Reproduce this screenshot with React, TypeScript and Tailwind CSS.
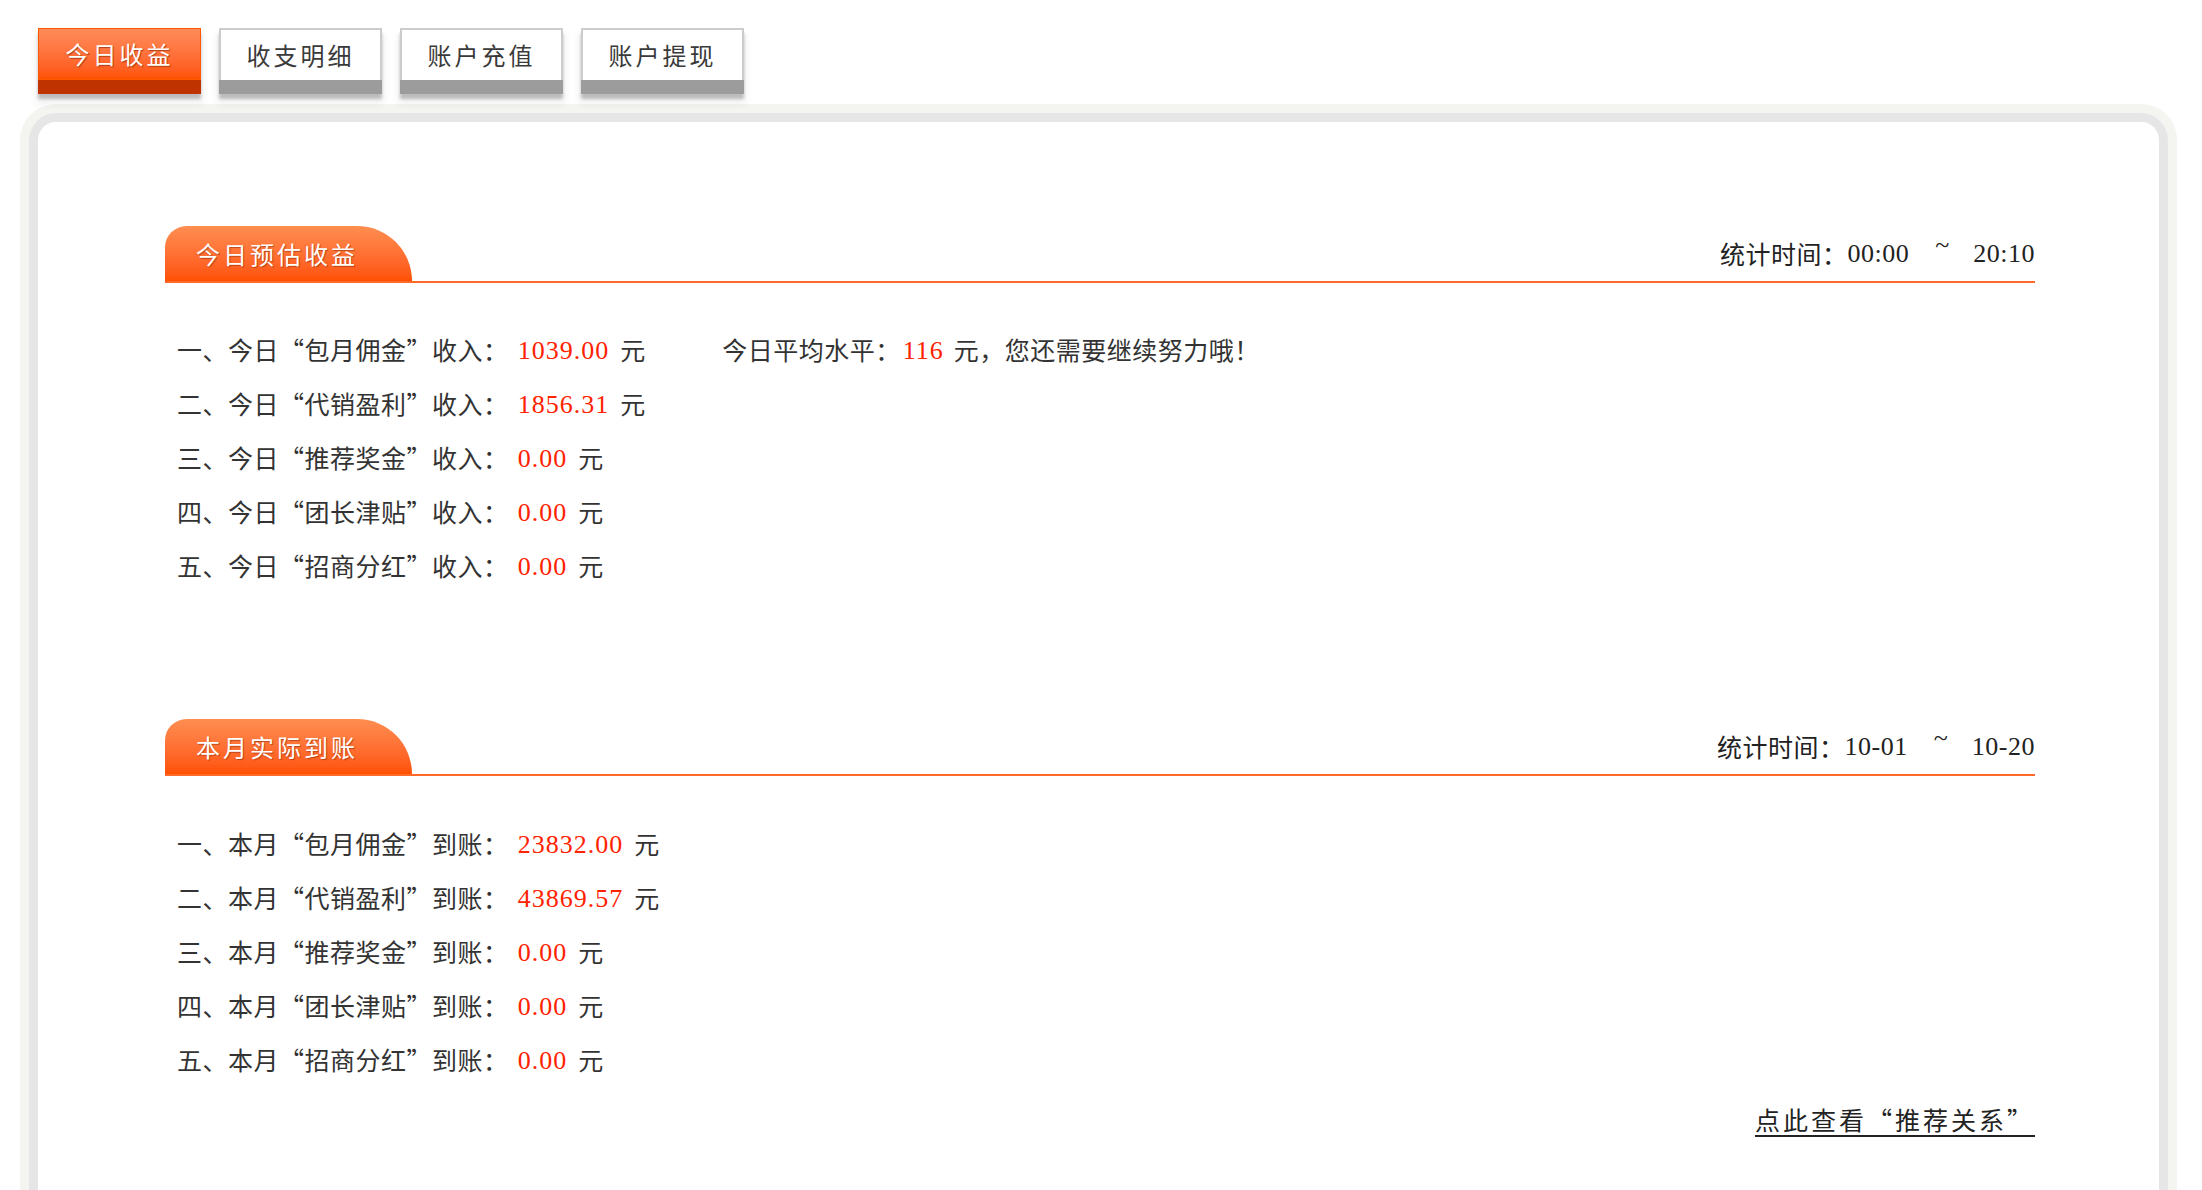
import type { ReactNode } from "react";

const cjk = "font-['Noto_Sans_CJK_SC','Liberation_Serif',serif]";
const num = "font-['Liberation_Serif','Noto_Sans_CJK_SC',serif]";

const tabs = ["今日收益", "收支明细", "账户充值", "账户提现"];

const todayRows = [
  { no: "一", name: "包月佣金", value: "1039.00" },
  { no: "二", name: "代销盈利", value: "1856.31" },
  { no: "三", name: "推荐奖金", value: "0.00" },
  { no: "四", name: "团长津贴", value: "0.00" },
  { no: "五", name: "招商分红", value: "0.00" },
];

const monthRows = [
  { no: "一", name: "包月佣金", value: "23832.00" },
  { no: "二", name: "代销盈利", value: "43869.57" },
  { no: "三", name: "推荐奖金", value: "0.00" },
  { no: "四", name: "团长津贴", value: "0.00" },
  { no: "五", name: "招商分红", value: "0.00" },
];

const Tab = ({ label, active }: { label: string; active?: boolean }) => (
  <div className="flex h-[66px] w-[163px] flex-col shadow-[0_5px_3px_0_rgba(0,0,0,0.22),0_8px_8px_2px_rgba(0,0,0,0.06)]">
    {active ? (
      <div className="flex flex-1 items-center justify-center border border-[#ff5a00] bg-gradient-to-b from-[#ff8c5a] to-[#ff5200]">
        <span className={`${cjk} text-[24px] tracking-[3px] text-white [text-shadow:1px_1px_1px_rgba(120,30,0,0.6)]`}>{label}</span>
      </div>
    ) : (
      <div className="flex flex-1 items-center justify-center border-2 border-b-0 border-[#cccccc] bg-white">
        <span className={`${cjk} text-[24px] tracking-[3px] text-[#3a3a3a]`}>{label}</span>
      </div>
    )}
    <div className={active ? "h-[14px] bg-[#bf3300]" : "h-[14px] bg-[#9c9c9c]"} />
  </div>
);

const SectionHeader = ({ title, stat }: { title: string; stat: ReactNode }) => (
  <div className="flex items-center justify-between border-b-2 border-[#ff6a2a]">
    <div className="flex h-[55px] w-[247px] items-center rounded-tl-[22px] rounded-tr-[56px] bg-gradient-to-b from-[#ff8d50] to-[#ff5000] pl-[31px]">
      <span className={`${cjk} text-[24px] tracking-[3px] text-white [text-shadow:1px_1px_1px_rgba(120,30,0,0.5)]`}>{title}</span>
    </div>
    <div className="text-[#222]">{stat}</div>
  </div>
);

const Stat = ({ from, to }: { from: string; to: string }) => (
  <span className="flex items-center">
    <span className={`${cjk} text-[25px] tracking-[0.5px]`}>统计时间：</span>
    <span className={`${num} text-[26px] tracking-[0.5px]`}>{from}</span>
    <span className={`${num} ml-[26px] mr-[24px] -translate-y-[9px] text-[26px]`}>~</span>
    <span className={`${num} text-[26px] tracking-[0.5px]`}>{to}</span>
  </span>
);

const Row = ({ no, period, name, kind, value, extra }: { no: string; period: string; name: string; kind: string; value: string; extra?: ReactNode }) => (
  <div className="flex h-[54px] items-center pl-[12px] text-[25px] text-[#333]">
    <span className={`${cjk} tracking-[0.5px]`}>
      {no}、{period}“{name}”{kind}：
    </span>
    <span className={`${num} ml-[9px] text-[26px] tracking-[1px] text-[#ff2200]`}>{value}</span>
    <span className={`${cjk} ml-[11px]`}>元</span>
    {extra}
  </div>
);

const App = () => {
  return (
    <div className="min-h-screen overflow-hidden bg-white">
      <div className="flex gap-[18px] pl-[38px] pt-[28px]">
        {tabs.map((t, i) => (
          <Tab key={t} label={t} active={i === 0} />
        ))}
      </div>

      <div className="ml-[20px] mt-[10px] w-[2157px] rounded-[36px] border-[9px] border-[#f4f5f0]">
        <div className="rounded-[27px] border-[9px] border-[#e6e6e6] bg-white pb-[200px] pl-[127px] pr-[124px] pt-[104px]">
          <SectionHeader title="今日预估收益" stat={<Stat from="00:00" to="20:10" />} />
          <div className="mt-[40px]">
            {todayRows.map((r, i) => (
              <Row
                key={r.no}
                no={r.no}
                period="今日"
                name={r.name}
                kind="收入"
                value={r.value}
                extra={
                  i === 0 ? (
                    <span className="ml-[77px] flex items-center">
                      <span className={`${cjk} tracking-[0.5px]`}>今日平均水平：</span>
                      <span className={`${num} ml-[2px] text-[26px] tracking-[1px] text-[#ff2200]`}>116</span>
                      <span className={`${cjk} ml-[10px] tracking-[0.5px]`}>元，您还需要继续努力哦！</span>
                    </span>
                  ) : null
                }
              />
            ))}
          </div>

          <div className="mt-[126px]">
            <SectionHeader title="本月实际到账" stat={<Stat from="10-01" to="10-20" />} />
          </div>
          <div className="mt-[41px]">
            {monthRows.map((r) => (
              <Row key={r.no} no={r.no} period="本月" name={r.name} kind="到账" value={r.value} />
            ))}
          </div>

          <div className="mt-[14px] flex justify-end">
            <a className={`${cjk} text-[25px] tracking-[3px] text-[#222] underline decoration-2 underline-offset-[5px]`}>
              点此查看“推荐关系”
            </a>
          </div>
        </div>
      </div>
    </div>
  );
};

export default App;
